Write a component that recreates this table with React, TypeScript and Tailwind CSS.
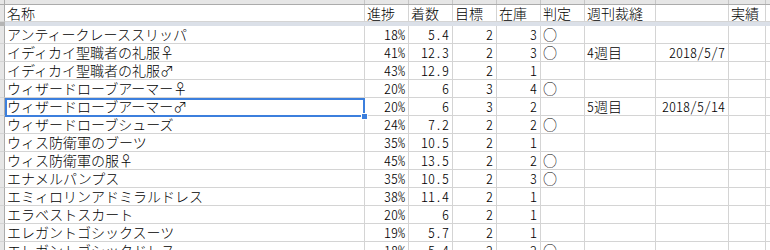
import React from "react";

type Row = [string, string, string, string, string, string, string, string, string];

const rows: Row[] = [
  ["アンティークレーススリッパ", "18%", "5.4", "2", "3", "○", "", "", ""],
  ["イディカイ聖職者の礼服♀", "41%", "12.3", "2", "3", "○", "4週目", "2018/5/7", ""],
  ["イディカイ聖職者の礼服♂", "43%", "12.9", "2", "1", "", "", "", ""],
  ["ウィザードローブアーマー♀", "20%", "6", "3", "4", "○", "", "", ""],
  ["ウィザードローブアーマー♂", "20%", "6", "3", "2", "", "5週目", "2018/5/14", ""],
  ["ウィザードローブシューズ", "24%", "7.2", "2", "2", "○", "", "", ""],
  ["ウィス防衛軍のブーツ", "35%", "10.5", "2", "1", "", "", "", ""],
  ["ウィス防衛軍の服♀", "45%", "13.5", "2", "2", "○", "", "", ""],
  ["エナメルパンプス", "35%", "10.5", "2", "3", "○", "", "", ""],
  ["エミィロリンアドミラルドレス", "38%", "11.4", "2", "1", "", "", "", ""],
  ["エラベストスカート", "20%", "6", "2", "1", "", "", "", ""],
  ["エレガントゴシックスーツ", "19%", "5.7", "2", "1", "", "", "", ""],
  ["エレガントゴシックドレス", "18%", "5.4", "2", "2", "○", "", "", ""],
];

const widths = ["w-[360px]", "w-[44px]", "w-[44px]", "w-[44px]", "w-[44px]", "w-[44px]", "w-[71px]", "w-[73px]", "w-[37px]"];
const rightAligned = [false, true, true, true, true, false, false, true, false];
const headers = ["名称", "進捗", "着数", "目標", "在庫", "判定", "週刊裁縫", "", "実績"];

export default function App() {
  return (
    <div className="relative w-[770px] h-[250px] overflow-hidden bg-white text-black text-[14px] font-light font-['Noto_Sans_CJK_JP',sans-serif] [font-feature-settings:'hwid']">
      {/* column header strip (partially visible) */}
      <div className="flex h-[5px] bg-[#e6e6e6] border-b border-[#ababab]">
        <div className="w-[5px] shrink-0 border-r border-[#ababab]" />
        {widths.map((w, i) => (
          <div key={i} className={`${w} shrink-0 border-r border-[#c6c6c6]`} />
        ))}
        <div className="flex-1" />
      </div>
      {/* header row */}
      <div className="flex h-[17px]">
        <div className="w-[5px] shrink-0 bg-[#e6e6e6] border-r border-[#ababab] border-b border-b-[#d4d4d4]" />
        {headers.map((h, i) => (
          <div
            key={i}
            className={`${widths[i]} shrink-0 border-r border-b border-[#d4d4d4] leading-[16px] pl-[2px] whitespace-nowrap`}
          >
            {h}
          </div>
        ))}
        <div className="flex-1 border-b border-[#d4d4d4]" />
      </div>
      {/* frozen pane separator */}
      <div className="flex h-[4px]">
        <div className="w-[5px] shrink-0 bg-[#b4b4b4]" />
        <div className="flex-1 bg-[#dbe0e8]" />
      </div>
      {/* data rows */}
      {rows.map((r, ri) => (
        <div key={ri} className="flex h-[18px]">
          <div className="w-[5px] shrink-0 bg-[#e6e6e6] border-r border-[#ababab] border-b border-b-[#d4d4d4]" />
          {r.map((c, ci) => (
            <div
              key={ci}
              className={`${widths[ci]} shrink-0 border-r border-b border-[#d4d4d4] leading-[17px] whitespace-nowrap ${
                rightAligned[ci] ? "text-right pr-[3px]" : "pl-[2px]"
              }`}
            >
              {c}
            </div>
          ))}
          <div className="flex-1 border-b border-[#d4d4d4]" />
        </div>
      ))}
      {/* selection */}
      <div className="absolute left-[5px] top-[98px] w-[360px] h-[19px] border-2 border-[#3c7fdd]" />
      <div className="absolute left-[361px] top-[113px] w-[7px] h-[7px] bg-[#3c7fdd] border border-white" />
    </div>
  );
}
